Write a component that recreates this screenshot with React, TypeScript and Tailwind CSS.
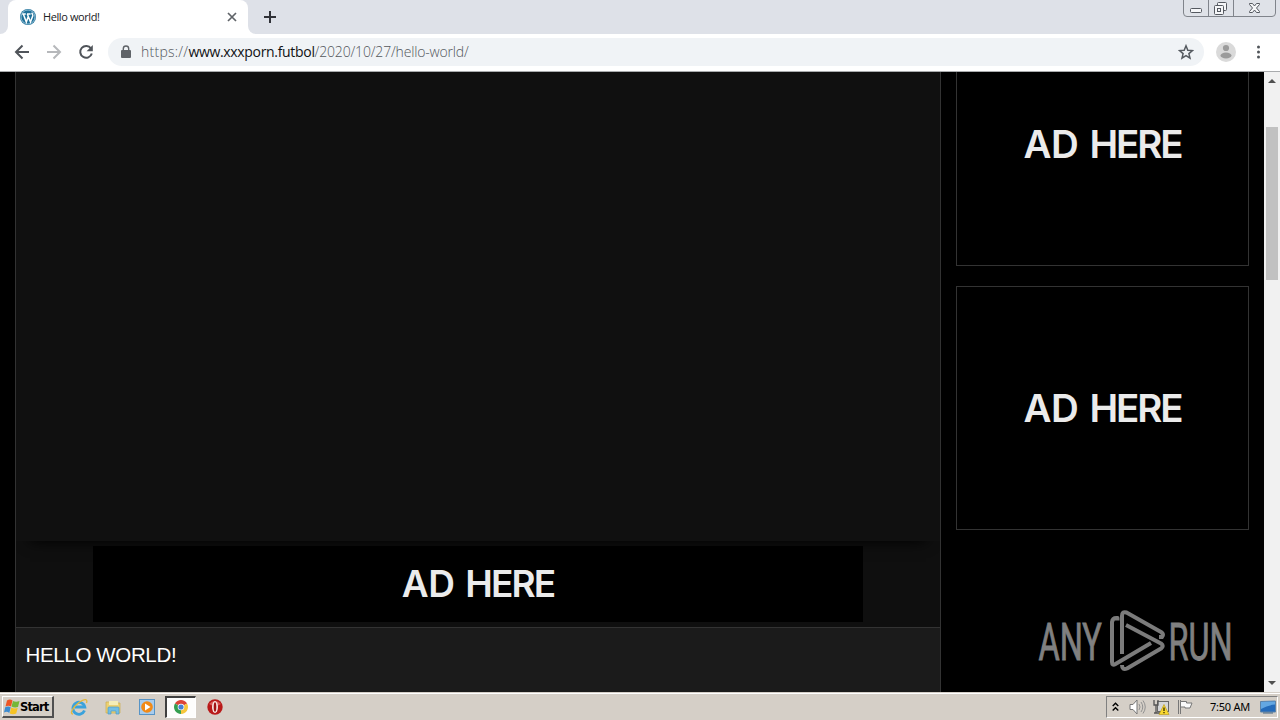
import React from 'react';

function WordPressIcon() {
  return (
    <svg className="ml-[12px] h-4 w-4 shrink-0" viewBox="0 0 16 16">
      <circle cx="8" cy="8" r="8" fill="#1f7099" />
      <circle cx="8" cy="8" r="7" fill="none" stroke="#a9d0e2" strokeWidth="0.8" />
      <path d="M2.2 4.9h3.6M7 4.9h3.6M3.3 5l3 8 2-5.6M7.3 5l3.2 8 2.2-6c.5-1.5-.9-2-.8-3.2" fill="none" stroke="#fff" strokeWidth="1.5" />
    </svg>
  );
}

function TabStrip() {
  return (
    <div className="flex h-[34px] items-start bg-[#dee1e8]">
      <div className="h-[34px] w-2 shrink-0 bg-white">
        <div className="h-full w-full rounded-br-[8px] bg-[#dee1e8]" />
      </div>
      <div className="flex h-[34px] w-[240px] shrink-0 items-center rounded-t-[8px] bg-white">
        <WordPressIcon />
        <span className="ml-[7px] w-[184px] whitespace-nowrap font-['Open_Sans',sans-serif] text-[11px] leading-4 tracking-[-0.400px] text-[#202124]">Hello world!</span>
        <svg className="h-[10px] w-[10px] shrink-0" viewBox="0 0 10 10">
          <path d="M1 1l8 8M9 1l-8 8" stroke="#5f6368" strokeWidth="1.7" />
        </svg>
      </div>
      <div className="h-[34px] w-2 shrink-0 bg-white">
        <div className="h-full w-full rounded-bl-[8px] bg-[#dee1e8]" />
      </div>
      <svg className="ml-2 mt-[11px] h-3 w-3" viewBox="0 0 12 12">
        <path d="M6 0v12M0 6h12" stroke="#303238" strokeWidth="2" />
      </svg>
      <svg className="ml-auto mr-[4px] h-[17px] w-[93px]" viewBox="0 0 93 17">
        <path d="M.5 0v13q0 3.5 3.5 3.5h85q3.500 0 3.500-3.500V0M25.500 0v16M50.500 0v16" fill="#dfe2e8" stroke="#80848b" />
        <g fill="#f5f6f8" stroke="#555960">
          <rect x="7.500" y="8.500" width="11" height="4" rx="1" />
          <rect x="34.500" y="2.500" width="9" height="8" rx="1" />
          <rect x="31.500" y="5.500" width="9" height="9" rx="1" />
          <rect x="34.500" y="8.500" width="3" height="3" />
          <path d="M66.500 3.500h3l2 2.500 2-2.500h3v1l-3 3.500 3 3.500v1h-3l-2-2.500-2 2.500h-3v-1l3-3.500-3-3.500z" />
        </g>
      </svg>
    </div>
  );
}

function Toolbar() {
  return (
    <div className="flex h-[38px] items-center border-b border-[#a9abad] bg-white pb-[1px]">
      <svg className="h-[36px] w-[108px] shrink-0" viewBox="0 0 108 36" fill="none" strokeWidth="2">
        <path d="M29 18H16.500M22.500 11.500L16 18l6.500 6.500" stroke="#50545a" />
        <path d="M47 18h12.500M53.500 11.500L60 18l-6.500 6.500" stroke="#b6b8bb" />
        <path d="M91 14.500a5.900 5.900 0 1 0 .8 5" stroke="#50545a" />
        <path d="M92.800 11v6.200h-6.200z" fill="#50545a" />
      </svg>
      <div className="flex h-[28px] w-[1096px] shrink-0 items-center rounded-full bg-[#f0f3f6]">
        <svg className="ml-[13px] h-[14px] w-[10px]" viewBox="0 0 10 14">
          <rect x="0" y="5" width="10" height="8" rx="1" fill="#5f6368" />
          <path d="M2.300 5.500V3.700a2.700 2.700 0 0 1 5.400 0v1.800" fill="none" stroke="#5f6368" strokeWidth="1.400" />
        </svg>
        <span className="ml-[10px] whitespace-nowrap font-['Open_Sans',sans-serif] text-[14px] font-light leading-5 tracking-[-0.170px] text-[#53575c]">
          <span className="tracking-[0.250px]">https://</span>
          <span className="font-normal tracking-[-0.320px] text-[#101114]">www.xxxporn.futbol</span>/2020/10/27/hello-world/
        </span>
        <svg className="ml-auto mr-[10px] h-4 w-4" viewBox="0 0 16 16">
          <path d="M8 1.800l1.800 4.400 4.700.4-3.600 3 1.100 4.600L8 11.700l-4 2.500 1.100-4.600-3.600-3 4.700-.4z" fill="none" stroke="#555a60" strokeWidth="1.500" />
        </svg>
      </div>
      <svg className="ml-[12px] h-5 w-5" viewBox="0 0 20 20">
        <circle cx="10" cy="10" r="10" fill="#dadada" />
        <circle cx="10" cy="6" r="3.100" fill="#9b9b9b" />
        <ellipse cx="10" cy="13.500" rx="5.500" ry="3" fill="#9b9b9b" />
      </svg>
      <svg className="ml-[20px] h-4 w-4" viewBox="0 0 16 16" fill="#505459">
        <circle cx="2.500" cy="3" r="1.500" />
        <circle cx="2.500" cy="8" r="1.500" />
        <circle cx="2.500" cy="13" r="1.500" />
      </svg>
    </div>
  );
}

function MainColumn() {
  return (
    <div className="ml-[15px] flex w-[926px] shrink-0 flex-col border-x border-[#333] bg-[#0f0f0f]">
      <div className="h-[469px] bg-[#101010] shadow-[0_14px_14px_-14px_#000]" />
      <div className="flex h-[86px] justify-center pt-[5px]">
        <div className="flex h-[76px] w-[770px] items-center justify-center bg-black">
          <span className="whitespace-nowrap font-['Inter',sans-serif] text-[37px] font-semibold leading-10 tracking-[-0.500px] text-[#ebebeb]">
            AD <span className="ml-[2px] tracking-[-1.900px]">HERE</span>
          </span>
        </div>
      </div>
      <div className="flex-1 border-t border-[#333] bg-[#1b1b1b] pl-[9.5px] pt-[14px]">
        <h1 className="whitespace-nowrap font-['Liberation_Sans',Arial,sans-serif] text-[20.5px] leading-[26px] tracking-[-0.350px] text-white">HELLO WORLD!</h1>
      </div>
    </div>
  );
}

function AdLabel() {
  return (
    <span className="whitespace-nowrap font-['Inter',sans-serif] text-[38.5px] font-semibold leading-10 tracking-[-0.500px] text-[#ebebeb]">
      AD <span className="ml-[2px] tracking-[-2.100px]">HERE</span>
    </span>
  );
}

function AnyRunLogo() {
  return (
    <svg className="ml-[68px] mt-[77px] h-[66px] w-[212px] shrink-0" viewBox="0 0 212 66">
      <g fill="#808080" stroke="#808080" strokeWidth=".9" fontFamily="Roboto, sans-serif" fontSize="52">
        <text transform="translate(14.500 52.500) scale(.64 1)" textLength="99" lengthAdjust="spacingAndGlyphs">ANY</text>
        <text transform="translate(144.500 52.500) scale(.64 1)" textLength="100" lengthAdjust="spacingAndGlyphs">RUN</text>
      </g>
      <g fill="none" stroke="#7b7b7b" strokeWidth="4" strokeLinejoin="round">
        <path d="M93.500 13.500V11q-5-.5-5.500 4v40q0 4 3.500 2L127 36" />
        <path d="M98 47V9q0-5 4.500-3.500L137 25q3.500 2.500 1 5l-3 0" />
        <path d="M102 18l35 18.500q3.500 2.500 0 5L103 61.500q-5 2-5-3.500" />
      </g>
    </svg>
  );
}

function Sidebar() {
  return (
    <div className="flex flex-1 flex-col bg-black pl-[15px]">
      <div className="flex h-[194px] w-[293px] shrink-0 justify-center border-x border-b border-[#333] pt-[52px]"><AdLabel /></div>
      <div className="mt-[20px] flex h-[244px] w-[293px] shrink-0 items-center justify-center border border-[#333]"><AdLabel /></div>
      <AnyRunLogo />
    </div>
  );
}

function Scrollbar() {
  return (
    <div className="flex w-4 shrink-0 flex-col items-center bg-[#f1f1f1]">
      <svg className="h-[17px] w-4" viewBox="0 0 16 17"><path d="M4 11l4-4 4 4z" fill="#505050" /></svg>
      <div className="mt-[38px] h-[153px] w-3 bg-[#c1c1c1]" />
      <svg className="mt-auto h-[17px] w-4" viewBox="0 0 16 17"><path d="M4 6l4 4 4-4z" fill="#505050" /></svg>
    </div>
  );
}

function WindowsFlag() {
  return (
    <svg className="h-4 w-4 shrink-0" viewBox="0 0 16 16">
      <path d="M3 1.500q3-2 5.500 0L7 7.500q-2.500-1.500-5.500 0z" fill="#ed5524" />
      <path d="M9 2q3 1.500 6.500 0L14 8q-3.500 1-6.500-.5z" fill="#75b737" />
      <path d="M1.200 8.200q3-1.500 5.500 0L5.300 14q-2.300-2-5.300-.5z" fill="#3c8bd0" />
      <path d="M7.200 8.500q3 1.500 6.500.5L12.200 14.500q-3.200 1.500-6.400 0z" fill="#f6c324" />
    </svg>
  );
}

function QuickLaunch() {
  return (
    <>
      <svg className="ml-[16px] h-[18px] w-[18px]" viewBox="0 0 18 18">
        <path d="M14.500 12.500a6 6 0 1 1 .3-3.500H5" fill="none" stroke="#3aa2dc" strokeWidth="2.800" />
        <path d="M3 16C-1 16 3 9 9 4.500S18 1 16.500 5" fill="none" stroke="#e4b83b" strokeWidth="1.300" />
      </svg>
      <svg className="ml-[17px] h-[17px] w-[17px]" viewBox="0 0 17 17">
        <path d="M1 3h5l1 1h8v10H1z" fill="#ecd173" stroke="#cdae4d" strokeWidth=".7" />
        <path d="M4 2h9v4H4z" fill="#f5edb7" />
        <path d="M3 15V9q0-1 1-1h9q1 0 1 1v6h-3v-3H6v3z" fill="#73bee4" stroke="#4c9bc6" strokeWidth=".7" />
      </svg>
      <svg className="ml-[17px] h-4 w-4" viewBox="0 0 16 16">
        <rect x=".5" y=".5" width="15" height="15" fill="#a8cced" stroke="#5794c6" />
        <circle cx="8" cy="8" r="5.800" fill="#f28a17" />
        <path d="M6 4.500v7L11.500 8z" fill="#fff" />
      </svg>
      <div className="ml-[10px] flex h-[22px] w-[31px] items-center justify-center border-b border-l-2 border-r border-t-2 border-b-white border-l-[#404040] border-r-white border-t-[#404040] bg-[#fdfdfc]">
        <svg className="mb-[1px] h-[14px] w-[14px]" viewBox="0 0 14 14">
          <path d="M7 7L.94 3.500A7 7 0 0 1 13.060 3.500z" fill="#dc4437" />
          <path d="M7 7l6.060-3.500A7 7 0 0 1 7 14z" fill="#f6c63c" />
          <path d="M7 7v7A7 7 0 0 1 .94 3.500z" fill="#359f50" />
          <circle cx="7" cy="7" r="3.300" fill="#fff" />
          <circle cx="7" cy="7" r="2.600" fill="#4680d4" />
        </svg>
      </div>
      <svg className="ml-[11px] h-4 w-4" viewBox="0 0 16 16">
        <circle cx="8" cy="8" r="7.700" fill="#b91919" />
        <path d="M2 5q6-6 12 0-6 4-12 0" fill="#dc5b58" />
        <ellipse cx="8" cy="8" rx="3" ry="6" fill="#f7e6e2" />
        <ellipse cx="8" cy="8" rx="1.300" ry="4.800" fill="#a21213" />
      </svg>
    </>
  );
}

function SystemTray() {
  return (
    <div className="ml-auto mr-[2px] flex h-[22px] w-[172px] items-center border border-b-white border-l-[#808080] border-r-white border-t-[#808080]">
      <svg className="ml-[5px] h-[10px] w-[7px] shrink-0" viewBox="0 0 7 10"><path d="M.7 4L3.500 1.200 6.300 4M.7 8.500L3.500 5.700l2.800 2.800" fill="none" stroke="#000" strokeWidth="1.400" /></svg>
      <svg className="ml-[10px] h-[16px] w-[17px] shrink-0" viewBox="0 0 17 16">
        <path d="M1 5.500h3L8 1v14L4 10.500H1z" fill="#fff" stroke="#777" />
        <path d="M10 5q2 3 0 6M12 3q3.500 5 0 10M14 1.500q4.500 6.500 0 13" fill="none" stroke="#929292" />
      </svg>
      <svg className="ml-[7px] h-[16px] w-[17px] shrink-0" viewBox="0 0 17 16">
        <rect x="4.500" y="2.500" width="11" height="10" fill="#d5d6d8" stroke="#666" />
        <path d="M1 1v5h4V1M3 6v8M1 14h7" fill="none" stroke="#555" strokeWidth="1.300" />
        <path d="M11 5.500l5 10H6z" fill="#f9d830" stroke="#b79712" strokeWidth=".6" />
        <path d="M11 8.500v3.500M11 13v1.300" stroke="#332900" strokeWidth="1.300" />
      </svg>
      <svg className="ml-[7px] h-[16px] w-[17px] shrink-0" viewBox="0 0 17 16">
        <path d="M1.500 1v14M3.500 1v14" stroke="#777" />
        <path d="M3.500 2.500h6v1.500h5.500l-2 5H8V8H3.500z" fill="#fafafa" stroke="#777" />
      </svg>
      <span className="ml-[16px] w-[41px] whitespace-nowrap font-['Noto_Sans',sans-serif] text-[11px] leading-4 tracking-[-0.250px] text-black">7:50 AM</span>
      <svg className="ml-[9px] h-[14px] w-4 shrink-0" viewBox="0 0 16 14">
        <path d="M.5 1.500l15-.5v11H.5z" fill="#246bba" stroke="#5d83a8" />
        <path d="M1 2l14-.5v3Q8 5 1 9z" fill="#63a7e2" />
        <path d="M3 13h10" stroke="#446581" />
      </svg>
    </div>
  );
}

function Taskbar() {
  return (
    <div className="flex h-[28px] items-center border-t border-[#d5cfc7] bg-[#d5cfc7] pt-[1px] shadow-[inset_0_1px_0_#fff]">
      <div className="ml-[2px] flex h-[22px] w-[52px] items-center border-b-2 border-l border-r-2 border-t border-b-[#505050] border-l-white border-r-[#505050] border-t-white pl-[1px]">
        <WindowsFlag />
        <span className="whitespace-nowrap font-['DejaVu_Sans',sans-serif] text-[11.5px] font-bold leading-4 tracking-[-0.850px] text-black">Start</span>
      </div>
      <QuickLaunch />
      <SystemTray />
    </div>
  );
}

export default function App() {
  return (
    <div className="flex h-[720px] w-[1280px] flex-col overflow-hidden bg-black">
      <TabStrip />
      <Toolbar />
      <div className="flex h-[620px] shrink-0 bg-black">
        <MainColumn />
        <Sidebar />
        <Scrollbar />
      </div>
      <Taskbar />
    </div>
  );
}
